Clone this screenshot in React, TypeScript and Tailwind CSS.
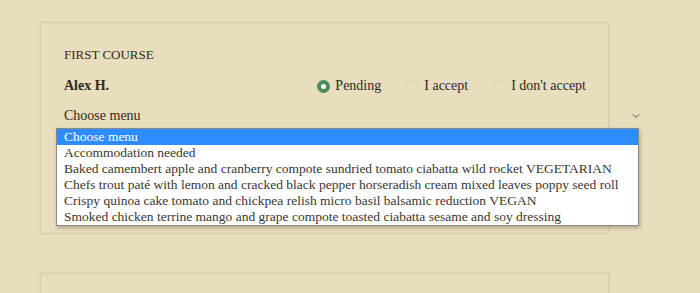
import { ChevronDown } from "lucide-react";

const options = [
  "Choose menu",
  "Accommodation needed",
  "Baked camembert apple and cranberry compote sundried tomato ciabatta wild rocket VEGETARIAN",
  "Chefs trout paté with lemon and cracked black pepper horseradish cream mixed leaves poppy seed roll",
  "Crispy quinoa cake tomato and chickpea relish micro basil balsamic reduction VEGAN",
  "Smoked chicken terrine mango and grape compote toasted ciabatta sesame and soy dressing",
];

const serif = "font-['Liberation_Serif',serif]";

function Radio({ label, checked }: { label: string; checked?: boolean }) {
  return (
    <label className="flex items-center gap-[5px]">
      {checked ? (
        <span className="flex h-[13px] w-[13px] items-center justify-center rounded-full bg-[#4c8a5c]">
          <span className="h-[5px] w-[5px] rounded-full bg-white" />
        </span>
      ) : (
        <span className="h-[13px] w-[13px] rounded-full border border-[#e3d7b5] bg-[#e9debf]" />
      )}
      <span>{label}</span>
    </label>
  );
}

export default function App() {
  return (
    <div className={`h-[293px] overflow-hidden bg-[#e8ddbd] pt-[22px] text-[#2f2a22] ${serif}`}>
      <div className="ml-[40px] flex w-[569px] flex-col gap-[39px]">
        <div className="relative h-[212px] border border-[#dacda7] px-[23px] pt-[23px] shadow-[0_0_2px_rgba(150,130,80,0.15)]">
          <div className="text-[13px] uppercase leading-[18px]">First Course</div>
          <div className="mt-[13px] flex items-center justify-between text-[14px] leading-[18px]">
            <span className="font-bold">Alex H.</span>
            <div className="mr-[-1px] flex items-center gap-[25px]">
              <Radio label="Pending" checked />
              <Radio label="I accept" />
              <Radio label="I don't accept" />
            </div>
          </div>
          <div className="mt-[12px] flex w-[578px] items-center justify-between text-[14px] leading-[18px]">
            <span>Choose menu</span>
            <ChevronDown className="h-[12px] w-[12px] text-[#5a5346]" strokeWidth={2} />
          </div>
          <ul className="absolute left-[15px] top-[105px] w-[583px] border border-[#8a8a8a] bg-white text-[13.5px] leading-[16px] shadow-[1px_2px_4px_rgba(0,0,0,0.25)]">
            {options.map((o, i) => (
              <li
                key={o}
                className={`whitespace-nowrap px-[7px] ${i === 0 ? "bg-[#2d8cff] text-white" : "text-[#3a3630]"}`}
              >
                {o}
              </li>
            ))}
          </ul>
        </div>
        <div className="h-[60px] border border-[#dacda7] shadow-[0_0_2px_rgba(150,130,80,0.15)]" />
      </div>
    </div>
  );
}
